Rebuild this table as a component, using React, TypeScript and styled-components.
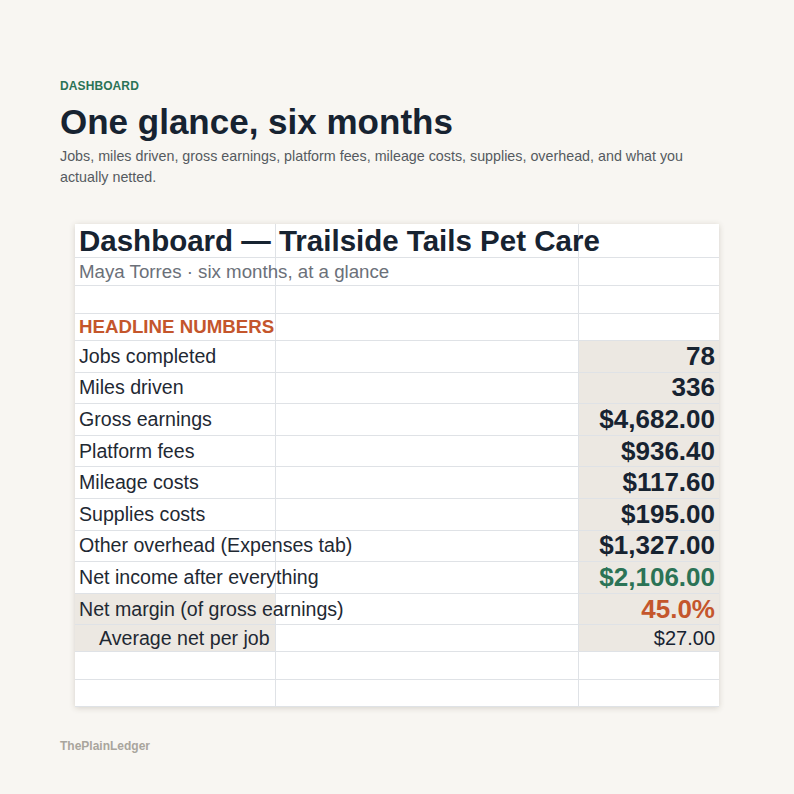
import React from "react";
import styled, { createGlobalStyle } from "styled-components";

const Global = createGlobalStyle`
  html, body { margin: 0; padding: 0; background: #f8f6f2; }
  body { font-family: "Liberation Sans", Arial, sans-serif; }
`;

const Page = styled.div`
  width: 794px;
  height: 794px;
  box-sizing: border-box;
  padding: 79px 60px 0 60px;
  display: flex;
  flex-direction: column;
`;

const Eyebrow = styled.div`
  font-size: 12px;
  font-weight: 700;
  color: #2b7356;
  letter-spacing: 0.1px;
  line-height: 14px;
`;

const Title = styled.h1`
  margin: 9px 0 0 0;
  font-size: 35px;
  line-height: 40px;
  font-weight: 700;
  color: #172331;
`;

const Lede = styled.p`
  margin: 4px 0 0 0;
  font-size: 14.3px;
  line-height: 21px;
  color: #555a60;
  max-width: 660px;
`;

const Card = styled.div`
  margin: 36px 0 0 15px;
  width: 644px;
  background: #ffffff;
  box-shadow: 0 1px 6px rgba(60, 50, 30, 0.18);
  display: grid;
  grid-template-columns: 201px 303px 140px;
`;

type CellProps = { $h: number; $shade?: boolean; $align?: "left" | "right"; $last?: boolean };

const Cell = styled.div<CellProps>`
  height: ${(p) => p.$h}px;
  box-sizing: border-box;
  border-bottom: 1px solid #dfe2e6;
  border-right: ${(p) => (p.$last ? "none" : "1px solid #dfe2e6")};
  background: ${(p) => (p.$shade ? "#ece8e2" : "#ffffff")};
  display: flex;
  align-items: center;
  justify-content: ${(p) => (p.$align === "right" ? "flex-end" : "flex-start")};
  padding: 0 4px;
  white-space: nowrap;
  overflow: visible;
  position: relative;
`;

const Spill = styled.span<{ $kind: string; $indent?: boolean }>`
  position: relative;
  z-index: 1;
  padding-left: ${(p) => (p.$indent ? "20px" : "0")};
  color: ${(p) =>
    p.$kind === "title" ? "#172331" : p.$kind === "sub" ? "#6b7079" : p.$kind === "section" ? "#c4562c" : "#1f2933"};
  font-size: ${(p) =>
    p.$kind === "title" ? "29.5px" : p.$kind === "sub" ? "18.7px" : p.$kind === "section" ? "18.7px" : "19.6px"};
  font-weight: ${(p) => (p.$kind === "title" || p.$kind === "section" ? 700 : 400)};
`;

const Value = styled.span<{ $tone?: "green" | "orange" | "plain" | "dark" }>`
  font-size: ${(p) => (p.$tone === "plain" ? "20px" : "26px")};
  font-weight: ${(p) => (p.$tone === "plain" ? 400 : 700)};
  color: ${(p) => (p.$tone === "green" ? "#2b7356" : p.$tone === "orange" ? "#c4562c" : "#172331")};
`;

const Footer = styled.div`
  margin-top: 32px;
  font-size: 12px;
  font-weight: 700;
  color: #a9a59d;
`;

type Row = {
  h: number;
  label?: string;
  kind?: string;
  value?: string;
  tone?: "green" | "orange" | "plain" | "dark";
  shadeA?: boolean;
  shadeC?: boolean;
  indent?: boolean;
};

const RH = 31.6;
const rows: Row[] = [
  { h: 34, label: "Dashboard — Trailside Tails Pet Care", kind: "title" },
  { h: 28, label: "Maya Torres · six months, at a glance", kind: "sub" },
  { h: 28 },
  { h: 27, label: "HEADLINE NUMBERS", kind: "section" },
  { h: RH, label: "Jobs completed", value: "78", shadeC: true },
  { h: RH, label: "Miles driven", value: "336", shadeC: true },
  { h: RH, label: "Gross earnings", value: "$4,682.00", shadeC: true },
  { h: RH, label: "Platform fees", value: "$936.40", shadeC: true },
  { h: RH, label: "Mileage costs", value: "$117.60", shadeC: true },
  { h: RH, label: "Supplies costs", value: "$195.00", shadeC: true },
  { h: RH, label: "Other overhead (Expenses tab)", value: "$1,327.00", shadeC: true },
  { h: RH, label: "Net income after everything", value: "$2,106.00", tone: "green", shadeC: true },
  { h: RH, label: "Net margin (of gross earnings)", value: "45.0%", tone: "orange", shadeA: true, shadeC: true },
  { h: 27, label: "Average net per job", value: "$27.00", tone: "plain", shadeA: true, shadeC: true, indent: true },
  { h: 28 },
  { h: 27 },
];

export default function App() {
  return (
    <>
      <Global />
      <Page>
        <Eyebrow>DASHBOARD</Eyebrow>
        <Title>One glance, six months</Title>
        <Lede>
          Jobs, miles driven, gross earnings, platform fees, mileage costs, supplies, overhead, and what you actually
          netted.
        </Lede>
        <Card>
          {rows.map((r, i) => (
            <React.Fragment key={i}>
              <Cell $h={r.h} $shade={r.shadeA}>
                {r.label && (
                  <Spill $kind={r.kind ?? "label"} $indent={r.indent}>
                    {r.label}
                  </Spill>
                )}
              </Cell>
              <Cell $h={r.h} />
              <Cell $h={r.h} $shade={r.shadeC} $align="right" $last>
                {r.value && <Value $tone={r.tone ?? "dark"}>{r.value}</Value>}
              </Cell>
            </React.Fragment>
          ))}
        </Card>
        <Footer>ThePlainLedger</Footer>
      </Page>
    </>
  );
}
